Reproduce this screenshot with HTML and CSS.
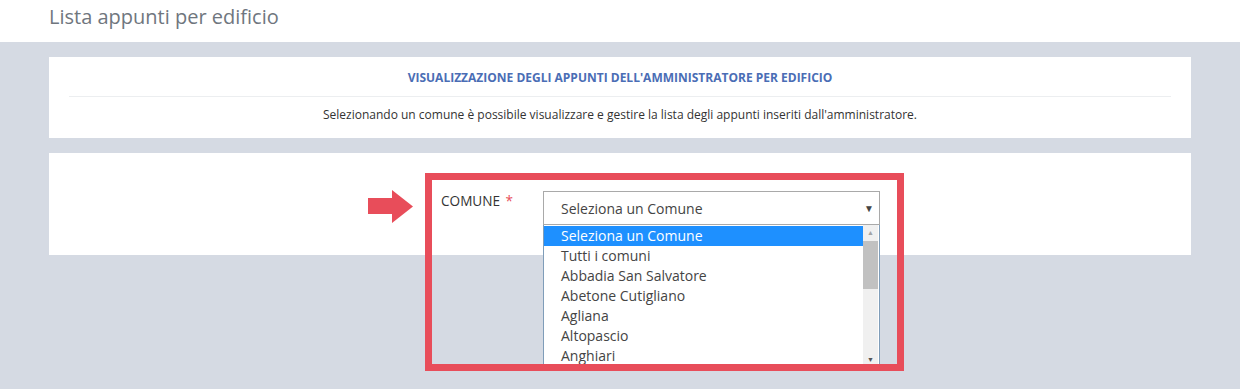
FILE: index.html
```html
<!DOCTYPE html>
<html lang="it">
<head>
    <meta charset="UTF-8">
    <meta name="viewport" content="width=device-width, initial-scale=1.0">
    <title>Lista appunti per edificio</title>
    <link rel="stylesheet" href="styles.css">
</head>
<body>
    <header class="page-header">
        <h1>Lista appunti per edificio</h1>
    </header>

    <main class="content">
        <section class="panel intro">
            <h2>VISUALIZZAZIONE DEGLI APPUNTI DELL'AMMINISTRATORE PER EDIFICIO</h2>
            <hr>
            <p>Selezionando un comune è possibile visualizzare e gestire la lista degli appunti inseriti dall'amministratore.</p>
        </section>

        <section class="panel filter">
            <div class="field">
                <svg class="pointer" width="45" height="33" viewBox="0 0 45 33">
                    <polygon points="0,8 24,8 24,0 45,16.5 24,33 24,24 0,24" fill="#e84d5a"/>
                </svg>

                <label class="field-label">COMUNE <span class="required">*</span></label>

                <div class="select-wrap">
                    <div class="select">
                        <span>Seleziona un Comune</span>
                        <span class="caret">&#9660;</span>
                    </div>
                    <div class="dropdown">
                        <ul class="options">
                            <li class="selected">Seleziona un Comune</li>
                            <li>Tutti i comuni</li>
                            <li>Abbadia San Salvatore</li>
                            <li>Abetone Cutigliano</li>
                            <li>Agliana</li>
                            <li>Altopascio</li>
                            <li>Anghiari</li>
                        </ul>
                        <div class="scrollbar">
                            <span class="scroll-btn">&#9650;</span>
                            <span class="thumb"></span>
                            <span class="scroll-btn down">&#9660;</span>
                        </div>
                    </div>
                </div>

                <div class="highlight"></div>
            </div>
        </section>
    </main>
</body>
</html>
```

FILE: styles.css
```css
body {
    margin: 0;
    font-family: "Open Sans", Arial, sans-serif;
    color: #333;
    background-color: #d5dae3;
    height: 389px;
    overflow: hidden;
}

.page-header {
    background-color: #fff;
    height: 42px;
    padding-left: 49px;
}

.page-header h1 {
    margin: 0;
    padding-top: 3px;
    font-size: 20px;
    font-weight: 400;
    line-height: 28px;
    color: #6f767e;
}

.content {
    padding: 15px 49px 0 49px;
}

.panel {
    background-color: #fff;
}

.intro {
    height: 81px;
    padding: 0 20px;
    text-align: center;
}

.intro h2 {
    margin: 0;
    padding-top: 13px;
    font-size: 12px;
    line-height: 16px;
    font-weight: 700;
    color: #4a6db5;
}

.intro hr {
    margin: 10px 0 0 0;
    border: none;
    border-top: 1px solid #eceef0;
}

.intro p {
    margin: 0;
    padding-top: 10px;
    font-size: 12px;
    line-height: 16px;
    color: #333;
}

.filter {
    margin-top: 15px;
    height: 82px;
    padding: 20px 0 0 376px;
}

.field {
    position: relative;
    width: 479px;
    display: flex;
    padding: 18px 0 0 16px;
    box-sizing: border-box;
}

.pointer {
    position: absolute;
    left: -57px;
    top: 17px;
}

.field-label {
    width: 102px;
    padding-top: 1px;
    font-size: 13.6px;
    line-height: 18px;
    color: #333;
    word-spacing: 2px;
}

.required {
    color: #e84d5a;
}

.select-wrap {
    position: relative;
    width: 337px;
}

.select {
    height: 34px;
    box-sizing: border-box;
    border: 1px solid #a9a9a9;
    display: flex;
    align-items: center;
    justify-content: space-between;
    padding: 0 5px 0 17px;
    font-size: 14px;
    color: #444;
}

.caret {
    font-size: 10px;
    color: #444;
}

.dropdown {
    position: absolute;
    left: 0;
    top: 34px;
    width: 337px;
    height: 144px;
    box-sizing: border-box;
    border: 1px solid #7f9db9;
    border-top: none;
    background-color: #fff;
    display: flex;
    overflow: hidden;
}

.options {
    list-style: none;
    margin: 0;
    padding: 1px 0 0 0;
    flex: 1;
}

.options li {
    height: 20px;
    line-height: 20px;
    padding-left: 17px;
    font-size: 14px;
    color: #444;
    white-space: nowrap;
}

.options li.selected {
    background-color: #1e90ff;
    color: #fff;
}

.scrollbar {
    width: 15px;
    margin-right: 1px;
    background-color: #f0f0f0;
    display: flex;
    flex-direction: column;
    align-items: center;
}

.scroll-btn {
    height: 16px;
    line-height: 16px;
    font-size: 7px;
    color: #a3a3a3;
}

.scroll-btn.down {
    margin-top: auto;
    color: #555;
    height: 14px;
    line-height: 12px;
}

.thumb {
    width: 15px;
    height: 48px;
    background-color: #c1c1c1;
}

.highlight {
    position: absolute;
    left: 0;
    top: 0;
    width: 479px;
    height: 198px;
    box-sizing: border-box;
    border: 7px solid #e84d5a;
    pointer-events: none;
}
```
